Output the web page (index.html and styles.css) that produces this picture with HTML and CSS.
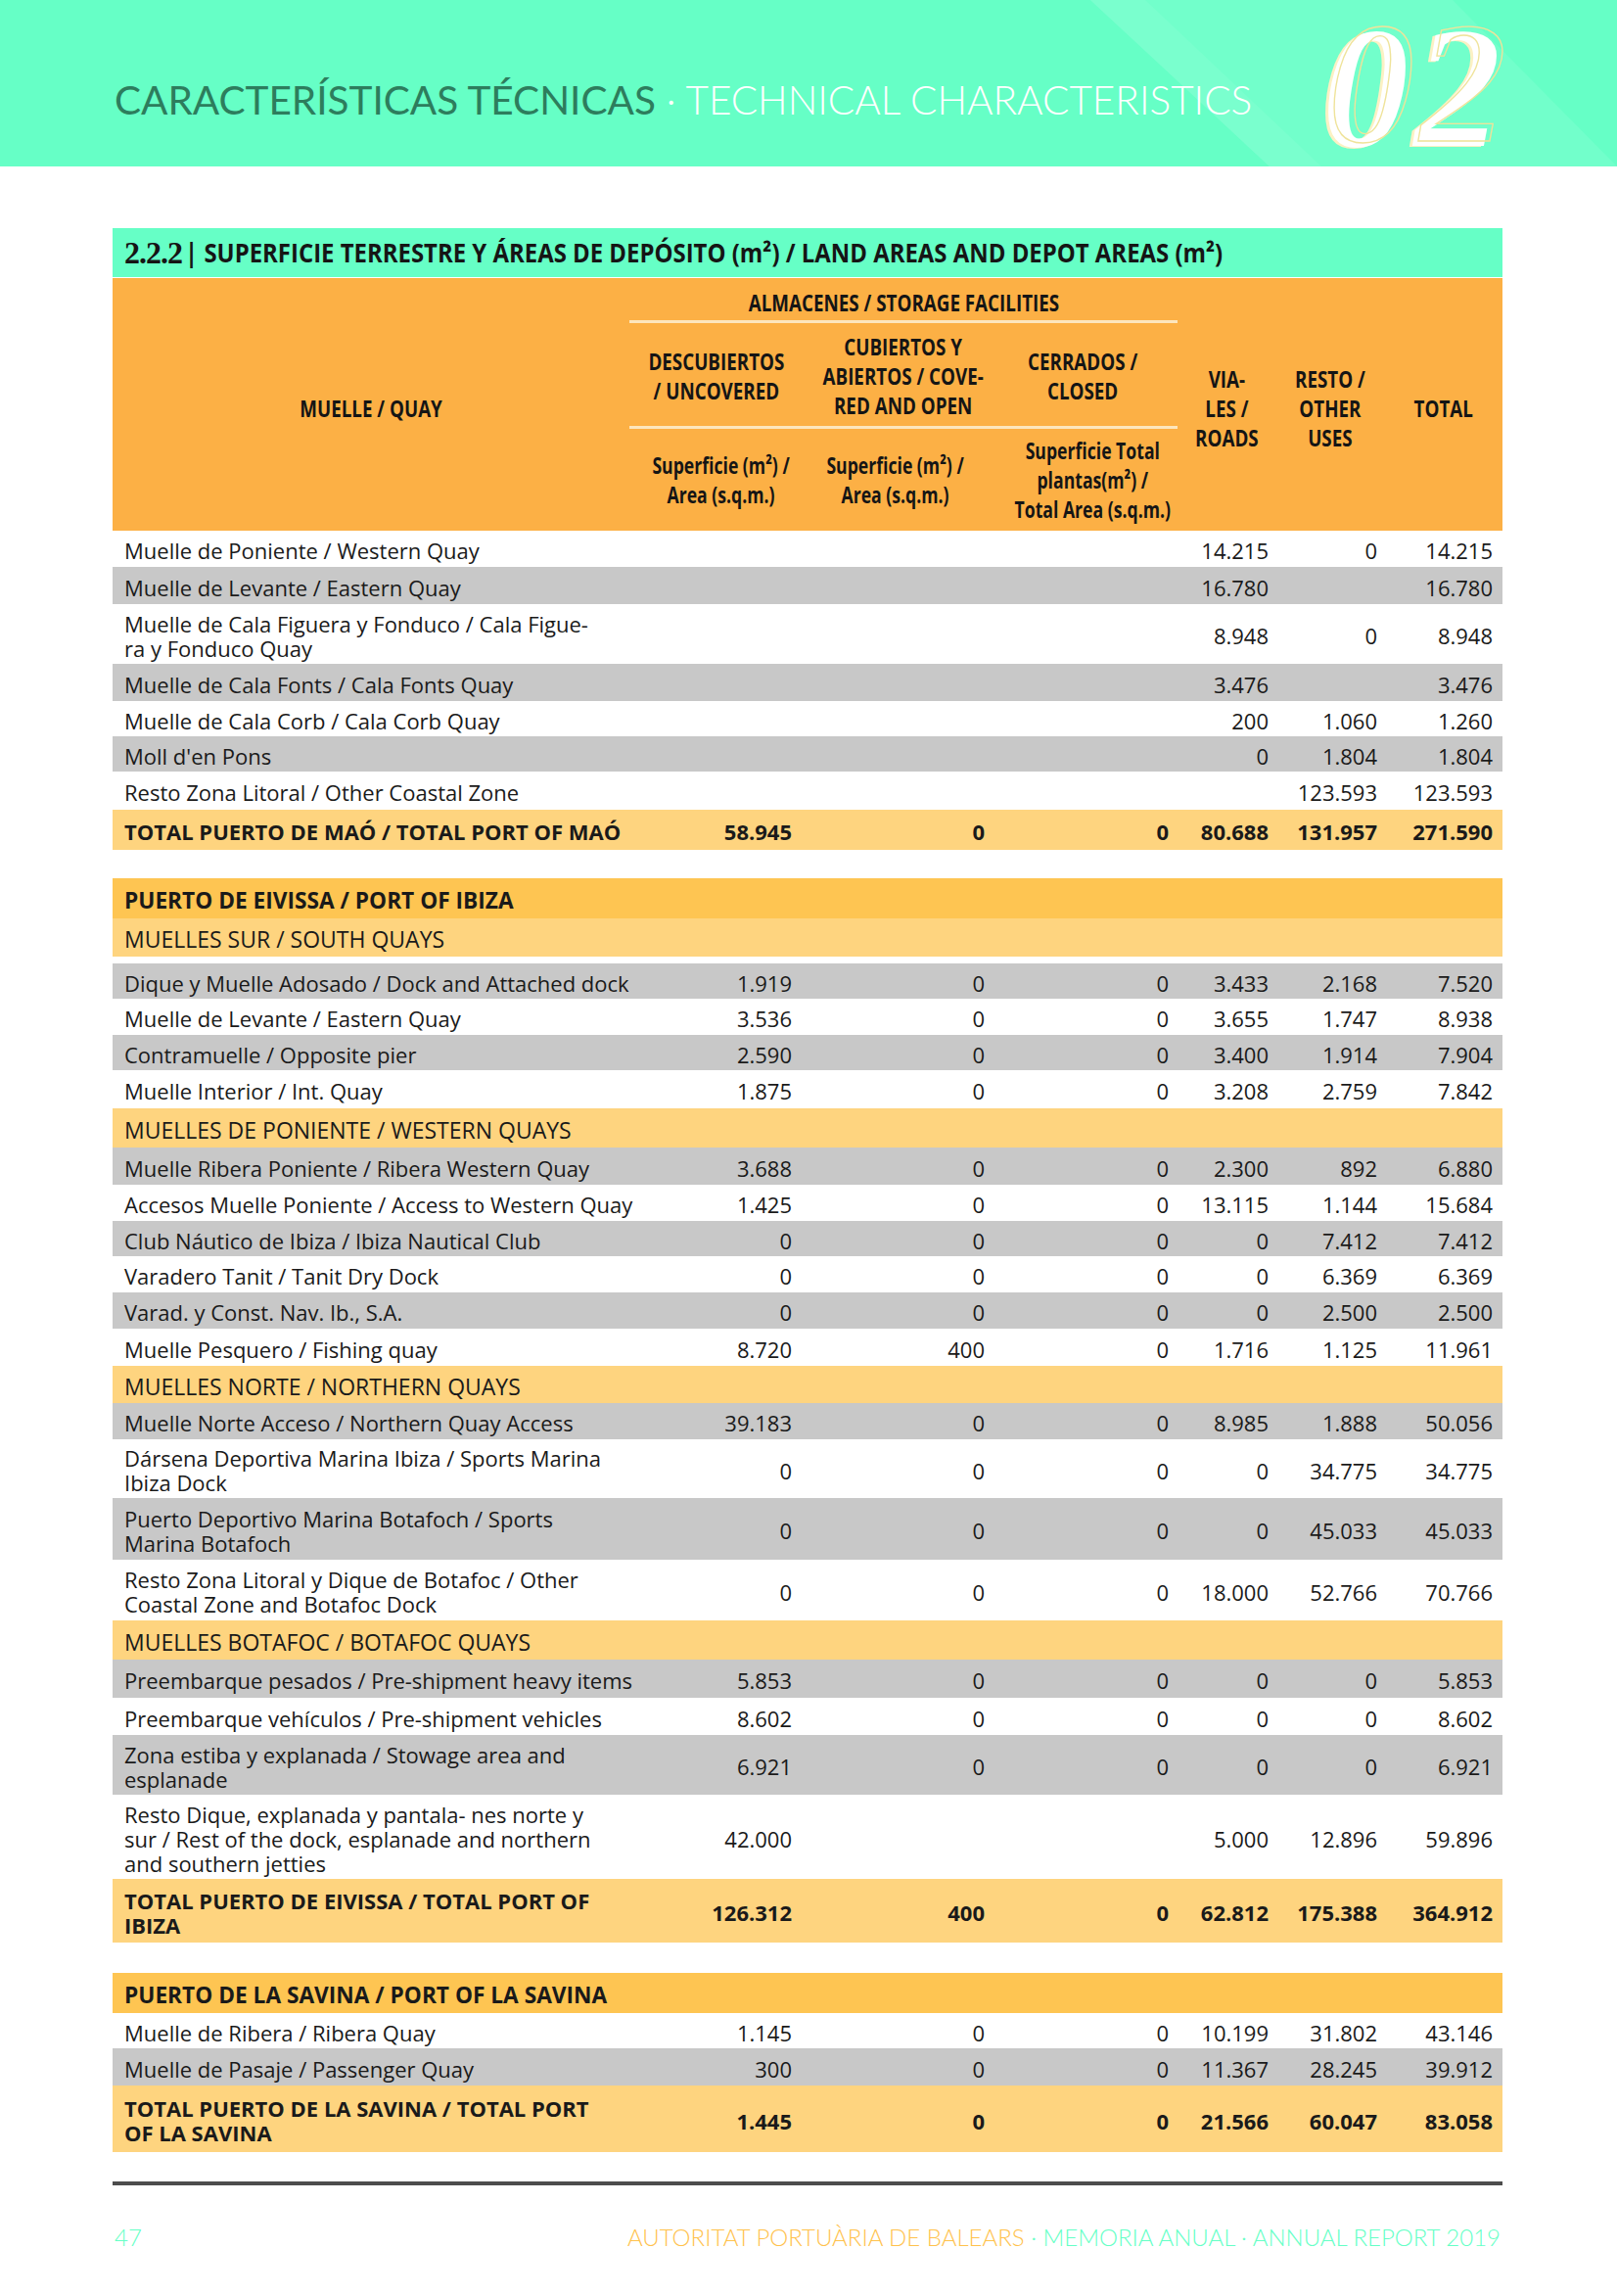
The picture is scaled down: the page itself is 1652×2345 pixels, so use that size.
FILE: index.html
```html
<!DOCTYPE html>
<html lang="es">
<head>
<meta charset="utf-8">
<title>2.2.2 Superficie terrestre y áreas de depósito</title>
<link rel="stylesheet" href="styles.css">
</head>
<body>
<header class="band">
  <div class="band-deco"></div>
  <div class="band-stripe"></div>
  <h1 class="band-title"><span class="es">CARACTERÍSTICAS TÉCNICAS</span><span class="en"> · TECHNICAL CHARACTERISTICS</span></h1>
  <div class="chapter"><span class="num">02</span></div>
</header>

<main class="sheet">
  <div class="title-bar"><span class="sec-num">2.2.2</span><span class="sec-text">| SUPERFICIE TERRESTRE Y ÁREAS DE DEPÓSITO (m²) / LAND AREAS AND DEPOT AREAS (m²)</span></div>

  <table class="data">
    <colgroup>
      <col class="c-label"><col class="c-desc"><col class="c-cub"><col class="c-cerr"><col class="c-via"><col class="c-resto"><col class="c-total">
    </colgroup>
    <thead>
      <tr class="hA">
        <th rowspan="3" class="hq"><span class="cn">MUELLE / QUAY</span></th>
        <th colspan="3" class="halm"><span class="cn">ALMACENES / STORAGE FACILITIES</span></th>
        <th rowspan="3" class="hq"><span class="cn">VIA-<br>LES /<br>ROADS</span></th>
        <th rowspan="3" class="hq"><span class="cn">RESTO /<br>OTHER<br>USES</span></th>
        <th rowspan="3" class="hq"><span class="cn">TOTAL</span></th>
      </tr>
      <tr class="hB">
        <th class="hline"><span class="cn">DESCUBIERTOS<br>/ UNCOVERED</span></th>
        <th class="hline"><span class="cn">CUBIERTOS Y<br>ABIERTOS / COVE-<br>RED AND OPEN</span></th>
        <th class="hline"><span class="cn">CERRADOS /<br>CLOSED</span></th>
      </tr>
      <tr class="hC">
        <th><span class="cn mx">Superficie (m²) /<br>Area (s.q.m.)</span></th>
        <th><span class="cn mx">Superficie (m²) /<br>Area (s.q.m.)</span></th>
        <th><span class="cn mx">Superficie Total<br>plantas(m²) /<br>Total Area (s.q.m.)</span></th>
      </tr>
    </thead>
    <tbody>
      <tr class="r37"><td>Muelle de Poniente / Western Quay</td><td></td><td></td><td></td><td>14.215</td><td>0</td><td>14.215</td></tr>
      <tr class="r38 g"><td>Muelle de Levante / Eastern Quay</td><td></td><td></td><td></td><td>16.780</td><td></td><td>16.780</td></tr>
      <tr class="r61"><td>Muelle de Cala Figuera y Fonduco / Cala Figue-<br>ra y Fonduco Quay</td><td></td><td></td><td></td><td>8.948</td><td>0</td><td>8.948</td></tr>
      <tr class="r38 g"><td>Muelle de Cala Fonts / Cala Fonts Quay</td><td></td><td></td><td></td><td>3.476</td><td></td><td>3.476</td></tr>
      <tr class="r36"><td>Muelle de Cala Corb / Cala Corb Quay</td><td></td><td></td><td></td><td>200</td><td>1.060</td><td>1.260</td></tr>
      <tr class="r36 g"><td>Moll d'en Pons</td><td></td><td></td><td></td><td>0</td><td>1.804</td><td>1.804</td></tr>
      <tr class="r39"><td>Resto Zona Litoral / Other Coastal Zone</td><td></td><td></td><td></td><td></td><td>123.593</td><td>123.593</td></tr>
      <tr class="r41 t"><td>TOTAL PUERTO DE MAÓ / TOTAL PORT OF MAÓ</td><td>58.945</td><td>0</td><td>0</td><td>80.688</td><td>131.957</td><td>271.590</td></tr>
      <tr class="gap29"><td colspan="7"></td></tr>

      <tr class="r41 s"><td colspan="7">PUERTO DE EIVISSA / PORT OF IBIZA</td></tr>
      <tr class="r39 u"><td colspan="7">MUELLES SUR / SOUTH QUAYS</td></tr>
      <tr class="gap7"><td colspan="7"></td></tr>
      <tr class="r36 g"><td>Dique y Muelle Adosado / Dock and Attached dock</td><td>1.919</td><td>0</td><td>0</td><td>3.433</td><td>2.168</td><td>7.520</td></tr>
      <tr class="r37"><td>Muelle de Levante / Eastern Quay</td><td>3.536</td><td>0</td><td>0</td><td>3.655</td><td>1.747</td><td>8.938</td></tr>
      <tr class="r36 g"><td>Contramuelle / Opposite pier</td><td>2.590</td><td>0</td><td>0</td><td>3.400</td><td>1.914</td><td>7.904</td></tr>
      <tr class="r39"><td>Muelle Interior / Int. Quay</td><td>1.875</td><td>0</td><td>0</td><td>3.208</td><td>2.759</td><td>7.842</td></tr>
      <tr class="r40 u"><td colspan="7">MUELLES DE PONIENTE / WESTERN QUAYS</td></tr>
      <tr class="r38 g"><td>Muelle Ribera Poniente / Ribera Western Quay</td><td>3.688</td><td>0</td><td>0</td><td>2.300</td><td>892</td><td>6.880</td></tr>
      <tr class="r37"><td>Accesos Muelle Poniente / Access to Western Quay</td><td>1.425</td><td>0</td><td>0</td><td>13.115</td><td>1.144</td><td>15.684</td></tr>
      <tr class="r36 g"><td>Club Náutico de Ibiza / Ibiza Nautical Club</td><td>0</td><td>0</td><td>0</td><td>0</td><td>7.412</td><td>7.412</td></tr>
      <tr class="r37"><td>Varadero Tanit / Tanit Dry Dock</td><td>0</td><td>0</td><td>0</td><td>0</td><td>6.369</td><td>6.369</td></tr>
      <tr class="r37 g"><td>Varad. y Const. Nav. Ib., S.A.</td><td>0</td><td>0</td><td>0</td><td>0</td><td>2.500</td><td>2.500</td></tr>
      <tr class="r38"><td>Muelle Pesquero / Fishing quay</td><td>8.720</td><td>400</td><td>0</td><td>1.716</td><td>1.125</td><td>11.961</td></tr>
      <tr class="r38 u"><td colspan="7">MUELLES NORTE / NORTHERN QUAYS</td></tr>
      <tr class="r37 g"><td>Muelle Norte Acceso / Northern Quay Access</td><td>39.183</td><td>0</td><td>0</td><td>8.985</td><td>1.888</td><td>50.056</td></tr>
      <tr class="r60"><td>Dársena Deportiva Marina Ibiza / Sports Marina<br>Ibiza Dock</td><td>0</td><td>0</td><td>0</td><td>0</td><td>34.775</td><td>34.775</td></tr>
      <tr class="r63 g"><td>Puerto Deportivo Marina Botafoch / Sports<br>Marina Botafoch</td><td>0</td><td>0</td><td>0</td><td>0</td><td>45.033</td><td>45.033</td></tr>
      <tr class="r62"><td>Resto Zona Litoral y Dique de Botafoc / Other<br>Coastal Zone and Botafoc Dock</td><td>0</td><td>0</td><td>0</td><td>18.000</td><td>52.766</td><td>70.766</td></tr>
      <tr class="r40 u"><td colspan="7">MUELLES BOTAFOC / BOTAFOC QUAYS</td></tr>
      <tr class="r39 g"><td>Preembarque pesados / Pre-shipment heavy items</td><td>5.853</td><td>0</td><td>0</td><td>0</td><td>0</td><td>5.853</td></tr>
      <tr class="r38"><td>Preembarque vehículos / Pre-shipment vehicles</td><td>8.602</td><td>0</td><td>0</td><td>0</td><td>0</td><td>8.602</td></tr>
      <tr class="r61 g"><td>Zona estiba y explanada / Stowage area and<br>esplanade</td><td>6.921</td><td>0</td><td>0</td><td>0</td><td>0</td><td>6.921</td></tr>
      <tr class="r86"><td>Resto Dique, explanada y pantala- nes norte y<br>sur / Rest of the dock, esplanade and northern<br>and southern jetties</td><td>42.000</td><td></td><td></td><td>5.000</td><td>12.896</td><td>59.896</td></tr>
      <tr class="r65 t"><td>TOTAL PUERTO DE EIVISSA / TOTAL PORT OF<br>IBIZA</td><td>126.312</td><td>400</td><td>0</td><td>62.812</td><td>175.388</td><td>364.912</td></tr>
      <tr class="gap31"><td colspan="7"></td></tr>

      <tr class="r41 s"><td colspan="7">PUERTO DE LA SAVINA / PORT OF LA SAVINA</td></tr>
      <tr class="r36"><td>Muelle de Ribera / Ribera Quay</td><td>1.145</td><td>0</td><td>0</td><td>10.199</td><td>31.802</td><td>43.146</td></tr>
      <tr class="r38 g"><td>Muelle de Pasaje / Passenger Quay</td><td>300</td><td>0</td><td>0</td><td>11.367</td><td>28.245</td><td>39.912</td></tr>
      <tr class="r68 t"><td>TOTAL PUERTO DE LA SAVINA / TOTAL PORT<br>OF LA SAVINA</td><td>1.445</td><td>0</td><td>0</td><td>21.566</td><td>60.047</td><td>83.058</td></tr>
    </tbody>
  </table>

  <div class="rule"></div>
  <footer class="foot">
    <span class="page-no">47</span>
    <span class="foot-right"><span class="org">AUTORITAT PORTUÀRIA DE BALEARS</span> · MEMORIA ANUAL · ANNUAL REPORT 2019</span>
  </footer>
</main>
</body>
</html>
```

FILE: styles.css
```css
* { box-sizing: border-box; }

body {
  margin: 0;
  background: #ffffff;
  color: #1a1a1a;
  font-family: "Open Sans", "DejaVu Sans", sans-serif;
}

/* ---------- top band ---------- */
.band {
  position: relative;
  height: 170px;
  background: #66ffc6;
  overflow: hidden;
  display: flex;
  align-items: flex-start;
  padding-left: 117px;
}
.band-deco {
  position: absolute;
  inset: 0;
  background: #72ffcb;
  clip-path: polygon(1114px 0, 1484px 0, 1652px 170px, 1297px 170px);
}
.band-stripe {
  position: absolute;
  inset: 0;
  background: #7affce;
  clip-path: polygon(1114px 0, 1170px 0, 1350px 170px, 1297px 170px);
}
.band-title {
  position: relative;
  margin: 78px 0 0;
  font-family: "Lato", "Open Sans", sans-serif;
  font-weight: 300;
  font-size: 40.5px;
  line-height: 48px;
  white-space: nowrap;
}
.band-title .es { color: #2d7d5d; font-weight: 400; }
.band-title .en { color: #ffffff; }

.chapter {
  position: relative;
  margin: 2px 113px 0 auto;
  font-family: "Liberation Serif", "DejaVu Serif", serif;
  font-style: italic;
  font-weight: 700;
  font-size: 176px;
  line-height: 1;
  letter-spacing: 6px;
}
.num {
  position: relative;
  color: #ffffff;
  text-shadow: -3px 1px 0 #fbf1c4;
}
.chapter::after {
  content: "02";
  position: absolute;
  left: 6px;
  top: -5px;
  color: transparent;
  -webkit-text-stroke: 1.3px #efe39a;
}

/* ---------- sheet ---------- */
.sheet {
  margin: 63px 117px 0 115px;
  width: 1420px;
}

.title-bar {
  height: 50px;
  background: #66ffc6;
  display: flex;
  align-items: center;
  padding-left: 12px;
  gap: 3px;
  color: #151515;
  white-space: nowrap;
}
.sec-num {
  font-family: "Liberation Serif", "DejaVu Serif", serif;
  font-weight: 700;
  font-size: 32px;
  letter-spacing: -1px;
}
.sec-text {
  display: inline-block;
  font-weight: 700;
  font-size: 26px;
  transform: scaleX(0.92);
  transform-origin: left center;
}

/* ---------- table ---------- */
.data {
  width: 1420px;
  margin-top: 1px;
  border-collapse: separate;
  border-spacing: 0;
  table-layout: fixed;
}
.c-label { width: 528px; }
.c-desc { width: 177px; }
.c-cub { width: 190px; }
.c-cerr { width: 193px; }
.c-via { width: 101px; }
.c-resto { width: 110px; }
.c-total { width: 121px; }

.data th {
  background: #fcb045;
  padding: 0;
  font-weight: 700;
  font-size: 23.5px;
  line-height: 30px;
  color: #151515;
  text-align: center;
  vertical-align: middle;
  white-space: nowrap;
}
.cn {
  display: inline-block;
  transform: scaleX(0.8);
  transform-origin: center;
}
.cn.mx { transform: scaleX(0.75); }

.hA { height: 46px; }
.hB { height: 108px; }
.hC { height: 104px; }
.data th.halm {
  border-bottom: 3px solid #fde6bd;
  padding-top: 6px;
}
.data th.hline { border-bottom: 3px solid #fde6bd; padding-top: 3px; }
.data th.hq { padding-top: 8px; }

.data td {
  padding: 4px 0 0;
  font-size: 22px;
  line-height: 25px;
  vertical-align: middle;
  white-space: nowrap;
  text-align: right;
}
.data td:first-child { text-align: left; padding-left: 12px; }
.data td:nth-child(2) { padding-right: 11px; }
.data td:nth-child(3) { padding-right: 4px; }
.data td:nth-child(4) { padding-right: 9px; }
.data td:nth-child(5) { padding-right: 8px; }
.data td:nth-child(6) { padding-right: 7px; }
.data td:nth-child(7) { padding-right: 10px; }

.g td { background: #c8c8c8; }
.t td { background: #fed47f; font-weight: 700; }
.s td { background: #fec552; font-weight: 700; font-size: 22.7px; }
.u td { background: #fed47f; font-size: 23px; }

.r36 { height: 36px; }
.r37 { height: 37px; }
.r38 { height: 38px; }
.r39 { height: 39px; }
.r40 { height: 40px; }
.r41 { height: 41px; }
.r60 { height: 60px; }
.r61 { height: 61px; }
.r62 { height: 62px; }
.r63 { height: 63px; }
.r65 { height: 65px; }
.r68 { height: 68px; }
.r86 { height: 86px; }
.gap7 { height: 7px; }
.gap29 { height: 29px; }
.gap31 { height: 31px; }
.gap7 td, .gap29 td, .gap31 td { padding: 0; }

/* ---------- footer ---------- */
.rule {
  height: 4px;
  margin-top: 30px;
  background: #4d4d4d;
}
.foot {
  display: flex;
  justify-content: space-between;
  align-items: center;
  margin-top: 38px;
  padding: 0 2px;
  font-family: "Lato", "Open Sans", sans-serif;
  font-weight: 300;
  font-size: 24px;
  line-height: 30px;
  color: #66ffc6;
  white-space: nowrap;
}
.foot .org { color: #ffc24d; }
```
